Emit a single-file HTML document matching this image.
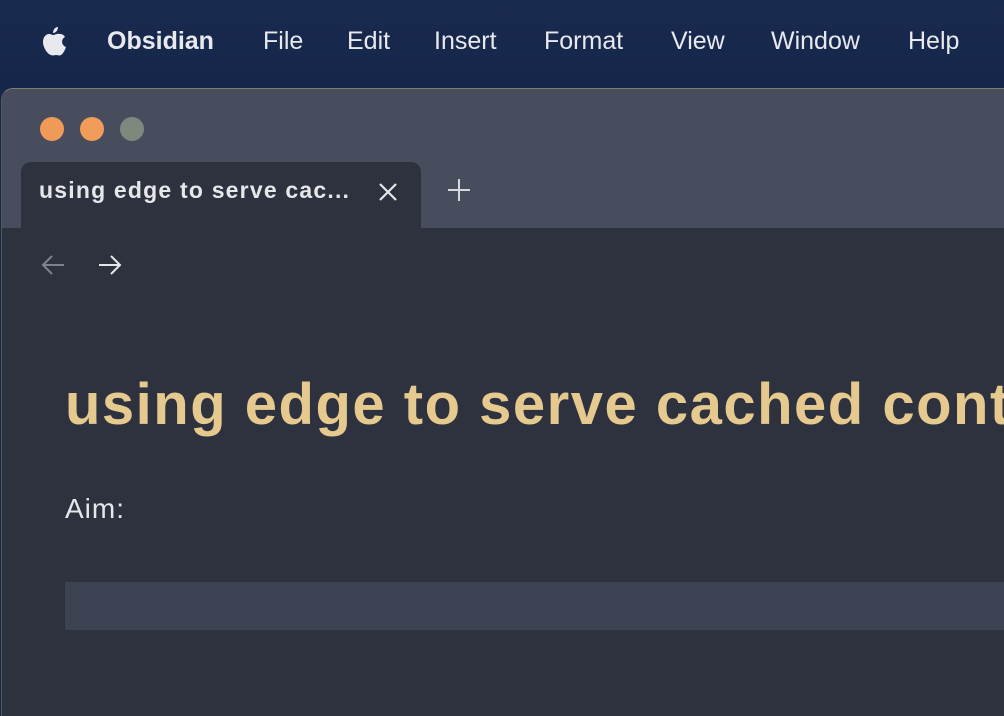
<!DOCTYPE html>
<html><head><meta charset="utf-8"><style>
*{margin:0;padding:0;box-sizing:border-box}
html,body{width:1004px;height:716px;overflow:hidden}
body{background:#162848;font-family:"Liberation Sans",sans-serif;position:relative}
.menu{position:absolute;top:0;left:0;width:1004px;height:88px;background:linear-gradient(#182a4e,#15264a)}
.menu span{position:absolute;top:27px;font-size:25px;color:#e8e9ee}
.win{position:absolute;left:1px;top:88px;width:1010px;height:628px;background:#2e323e;border-radius:12px 0 0 0;border-top:1px solid #7a8070;border-left:1px solid #555a60;overflow:hidden}
.title{position:absolute;left:0;top:0;width:100%;height:139px;background:#474d5d}
.dot{position:absolute;top:28px;width:24px;height:24px;border-radius:50%}
.tab{position:absolute;left:19px;top:73px;width:400px;height:70px;background:#2e323e;border-radius:10px 10px 0 0}
.tabt{position:absolute;left:37px;top:88px;font-size:23px;font-weight:bold;color:#e6e7ea;letter-spacing:1.2px}
.content{position:absolute;left:0;top:139px;width:100%;height:520px;background:#2e323e}
h1{position:absolute;left:63px;top:282px;font-size:58px;font-weight:bold;color:#e5c98f;white-space:nowrap;letter-spacing:1.5px}
.aim{position:absolute;left:63px;top:404px;font-size:28px;color:#e6e7ea;letter-spacing:1px}
.code{position:absolute;left:63px;top:493px;width:960px;height:48px;background:#3d4352}
</style></head><body>
<div class="menu">
<svg style="position:absolute;left:38px;top:25px" width="30" height="34" viewBox="0 0 30 34"><path fill="#e8e9ee" d="M20 2c0 3-2 6-5 6 0-3 2-6 5-6zM15 10c2 0 4-2 7-1 2 0 4 1 5 3-4 2-4 8 1 10-1 3-3 7-5 8-2 1-3 0-5 0s-3 1-5 0C9 29 5 22 5 17c0-5 3-8 6-8 2 0 3 1 4 1z"/></svg>
<span style="left:107px;font-weight:bold">Obsidian</span>
<span style="left:263px">File</span>
<span style="left:347px">Edit</span>
<span style="left:434px">Insert</span>
<span style="left:544px">Format</span>
<span style="left:671px">View</span>
<span style="left:771px">Window</span>
<span style="left:908px">Help</span>
</div>
<div class="win">
<div class="title"></div>
<div class="dot" style="left:38px;background:#f09a58"></div>
<div class="dot" style="left:78px;background:#f29c5a"></div>
<div class="dot" style="left:118px;background:#7e887d"></div>
<div class="tab"></div>
<div class="tabt">using edge to serve cac...</div>
<svg style="position:absolute;left:375px;top:92px" width="22" height="22"><path d="M3 3L19 19M19 3L3 19" stroke="#e6e7ea" stroke-width="2.2"/></svg>
<svg style="position:absolute;left:445px;top:89px" width="24" height="24"><path d="M12 1V23M1 12H23" stroke="#d8d9dc" stroke-width="2"/></svg>
<div class="content"></div>
<svg style="position:absolute;left:38px;top:165px" width="26" height="22"><path d="M24 11H3M12 2L3 11L12 20" stroke="#7d8290" stroke-width="2" fill="none"/></svg>
<svg style="position:absolute;left:95px;top:165px" width="26" height="22"><path d="M2 11H23M14 2L23 11L14 20" stroke="#e6e7ea" stroke-width="2" fill="none"/></svg>
<h1>using edge to serve cached content</h1>
<div class="aim">Aim:</div>
<div class="code"></div>
</div>
</body></html>
